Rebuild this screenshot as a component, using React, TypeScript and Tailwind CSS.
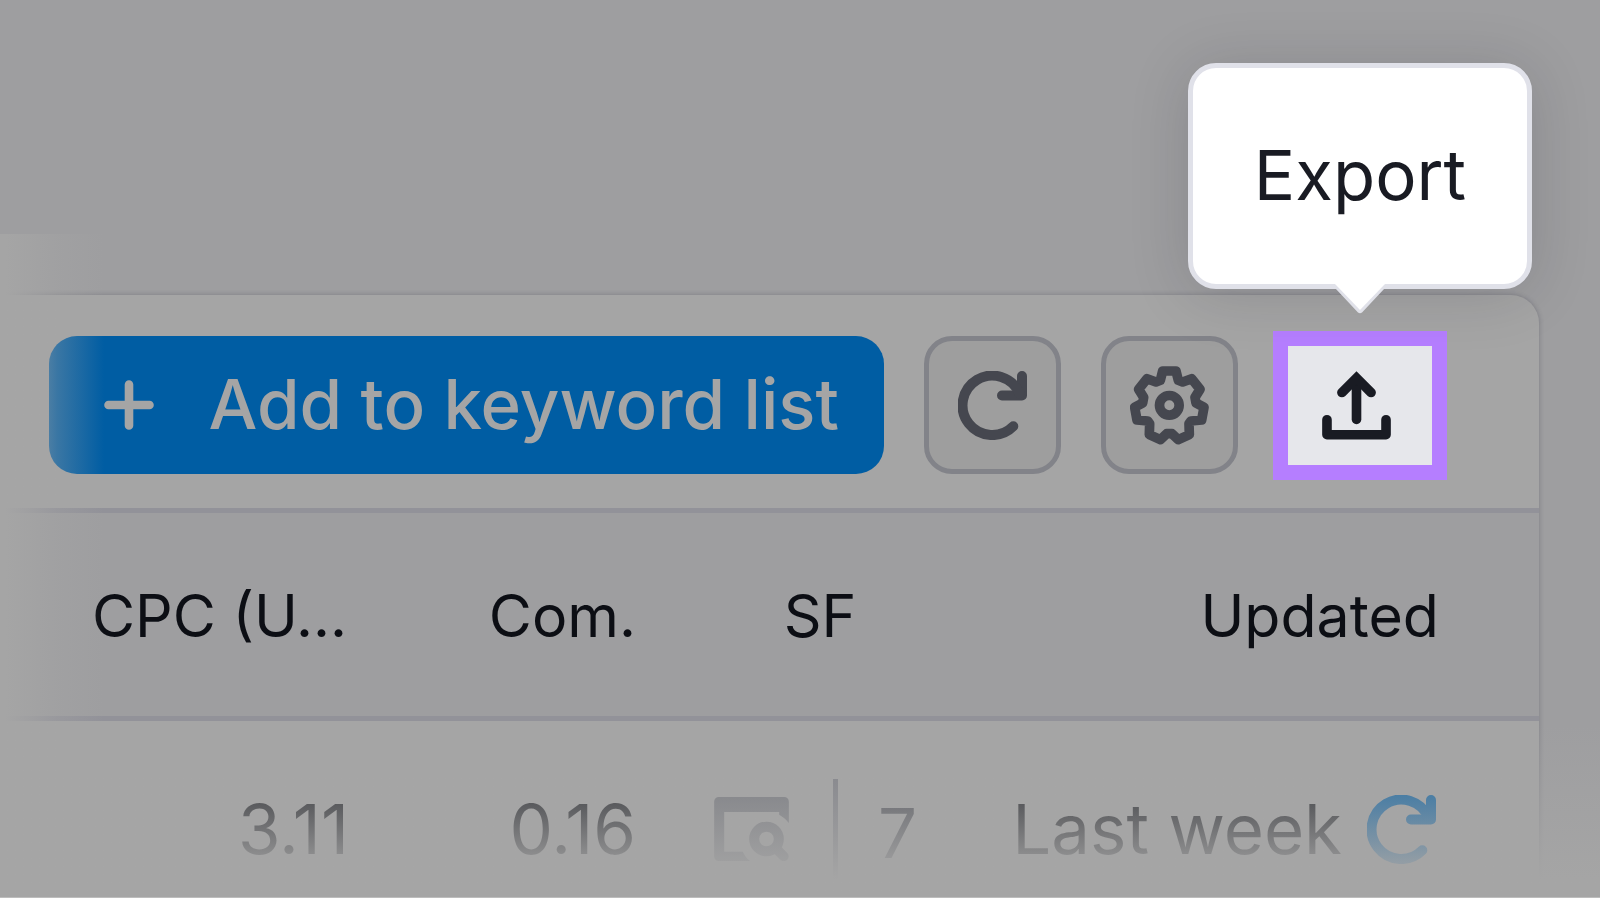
import React from "react";

function RefreshIcon({ className = "" }: { className?: string }) {
  return (
    <svg
      viewBox="0 0 69 69"
      className={`size-[69px] shrink-0 ${className}`}
      fill="none"
      stroke="currentColor"
      strokeWidth="10"
      strokeLinecap="round"
      strokeLinejoin="round"
      aria-hidden="true"
    >
      <path d="M64 5V24.5H44" />
      <path d="M61.4 22.3A29.7 29.7 0 1 0 55.3 55.3" />
    </svg>
  );
}

function GearIcon() {
  return (
    <svg
      viewBox="750 165 237 237"
      className="size-[79px] shrink-0"
      fill="none"
      stroke="currentColor"
      strokeWidth="29"
      strokeLinejoin="round"
      aria-hidden="true"
    >
      <path d="M848 180H888L895 208L908 213L935 203L960 235L945 259L948 276L972 289L965 327L933 330L927 338L928 371L895 386L876 368H860L841 386L808 371L809 338L803 330L771 327L764 289L788 276L791 259L776 235L801 203L828 213L841 208Z" />
      <circle cx="868" cy="283" r="29.5" />
    </svg>
  );
}

function UploadIcon() {
  return (
    <svg
      viewBox="305 210 208 208"
      className="size-[69px] shrink-0"
      fill="none"
      stroke="currentColor"
      strokeWidth="29"
      strokeLinecap="round"
      aria-hidden="true"
    >
      <path d="M320 357V402H498V357" strokeLinejoin="round" />
      <path d="M409 356V236" />
      <path d="M365 275L409 231L453 275" strokeLinejoin="miter" />
    </svg>
  );
}

function PlusIcon() {
  return (
    <svg
      viewBox="0 0 50 50"
      className="size-[50px] shrink-0"
      fill="none"
      stroke="currentColor"
      strokeWidth="8.6"
      strokeLinecap="round"
      aria-hidden="true"
    >
      <path d="M25 4.5V45.5M4.5 25H45.5" />
    </svg>
  );
}

function SerpIcon() {
  return (
    <svg
      viewBox="162 174 224 192"
      className="h-[64px] w-[75px] shrink-0"
      fill="none"
      aria-hidden="true"
    >
      <path
        fill="currentColor"
        d="M176 174H372a14 14 0 0 1 14 14V252C378 241 368 233 357 227V219H192V338H248C253 349 260 359 270 366H176a14 14 0 0 1-14-14V188a14 14 0 0 1 14-14Z"
      />
      <circle cx="319" cy="300" r="37" stroke="currentColor" strokeWidth="30" />
      <path d="M349 330L371 352" stroke="currentColor" strokeWidth="29" strokeLinecap="round" />
    </svg>
  );
}

function IconButton({ label, children }: { label: string; children: React.ReactNode }) {
  return (
    <button
      type="button"
      aria-label={label}
      className="flex h-[138px] w-[137px] shrink-0 items-center justify-center rounded-[28px] border-[5px] border-[#828389] bg-[#9e9e9e] text-[#45474f]"
    >
      {children}
    </button>
  );
}

function Tooltip({ children }: { children: React.ReactNode }) {
  return (
    <div
      role="tooltip"
      className="absolute bottom-full left-1/2 mb-[42px] flex h-[226px] w-[344px] -translate-x-1/2 items-center justify-center rounded-[28px] border-[5px] border-[#e0e1e9] bg-white text-[69px] text-[#191b23] shadow-[0_5px_60px_rgba(25,27,35,0.16)]"
    >
      {children}
      <svg
        viewBox="0 0 54 30"
        className="absolute top-full left-1/2 h-[30px] w-[54px] -translate-x-1/2"
        aria-hidden="true"
      >
        <path d="M0 0H54V4H52L29 28.5Q27 30 25 28.5L2 4H0Z" fill="#e0e1e9" />
        <path d="M2 0H52L27 26Z" fill="#fff" />
      </svg>
    </div>
  );
}

export default function App() {
  return (
    <div className="relative flex h-screen flex-col overflow-hidden border-b border-[#bdbdbd] bg-[#9e9ea0] font-['Inter',sans-serif] text-[#0c0e14]">
      <main className="relative mt-[234px] flex grow flex-col pt-[61px]">
        <section className="mr-[61px] grow rounded-tr-[28px] bg-[#a5a5a5] shadow-[0_0_5px_rgba(40,40,60,0.3)]">
          <div className="flex h-[213px] items-center justify-end gap-[35px] pt-[7px] pr-[92px]">
            <div className="flex items-center gap-10">
              <button
                type="button"
                className="flex h-[138px] items-center gap-[55px] rounded-[28px] bg-[#005da3] pr-[45px] pl-[55px] text-[69px] font-medium whitespace-nowrap text-[#a5a5a5]"
              >
                <PlusIcon />
                Add to keyword list
              </button>
              <IconButton label="Refresh">
                <RefreshIcon />
              </IconButton>
              <IconButton label="Settings">
                <GearIcon />
              </IconButton>
            </div>
            <div className="relative">
              <button
                type="button"
                aria-label="Export"
                className="flex h-[149px] w-[174px] items-center justify-center border-[15px] border-[#b57eff] bg-[#e6e7eb] pr-2 text-[#191b23]"
              >
                <UploadIcon />
              </button>
              <Tooltip>Export</Tooltip>
            </div>
          </div>

          <table className="w-full table-fixed border-collapse whitespace-nowrap">
            <colgroup>
              <col className="w-[349px]" />
              <col className="w-[287px]" />
              <col className="w-[368px]" />
              <col />
            </colgroup>
            <thead className="bg-[#9e9ea0] text-[59px]">
              <tr className="h-[208px] border-y-[5px] border-[#929299]">
                <th scope="col" className="pt-1 pl-[92px] text-left font-normal">CPC (U...</th>
                <th scope="col" className="pt-1 text-right font-normal">Com.</th>
                <th scope="col" className="pt-1 text-center font-normal">SF</th>
                <th scope="col" className="pt-1 pr-[100px] text-right font-normal">Updated</th>
              </tr>
            </thead>
            <tbody className="text-[69px]">
              <tr className="h-[219px]">
                <td className="text-right">3.11</td>
                <td className="text-right">0.16</td>
                <td className="pl-[78px]">
                  <div className="flex items-center text-[#45474f]">
                    <span className="text-[#707279]">
                      <SerpIcon />
                    </span>
                    <span className="ml-11 h-[100px] w-[5px] bg-[#7c7d84]" />
                    <a href="#features" className="ml-10 pt-2">7</a>
                  </div>
                </td>
                <td className="pr-[103px]">
                  <div className="flex items-center justify-end gap-[25px]">
                    Last week
                    <button type="button" aria-label="Update metrics" className="text-[#005da3]">
                      <RefreshIcon />
                    </button>
                  </div>
                </td>
              </tr>
            </tbody>
          </table>
        </section>
        <div className="pointer-events-none absolute inset-y-0 left-0 w-[104px] bg-linear-to-r from-[#a5a5a5] from-5% via-[#a5a5a5]/35 via-55% to-[#a5a5a5]/0" />
      </main>
      <div className="pointer-events-none absolute inset-x-0 bottom-0 h-[172px] bg-linear-to-b from-[#a5a5a5]/0 to-[#a5a5a5] to-90%" />
    </div>
  );
}
